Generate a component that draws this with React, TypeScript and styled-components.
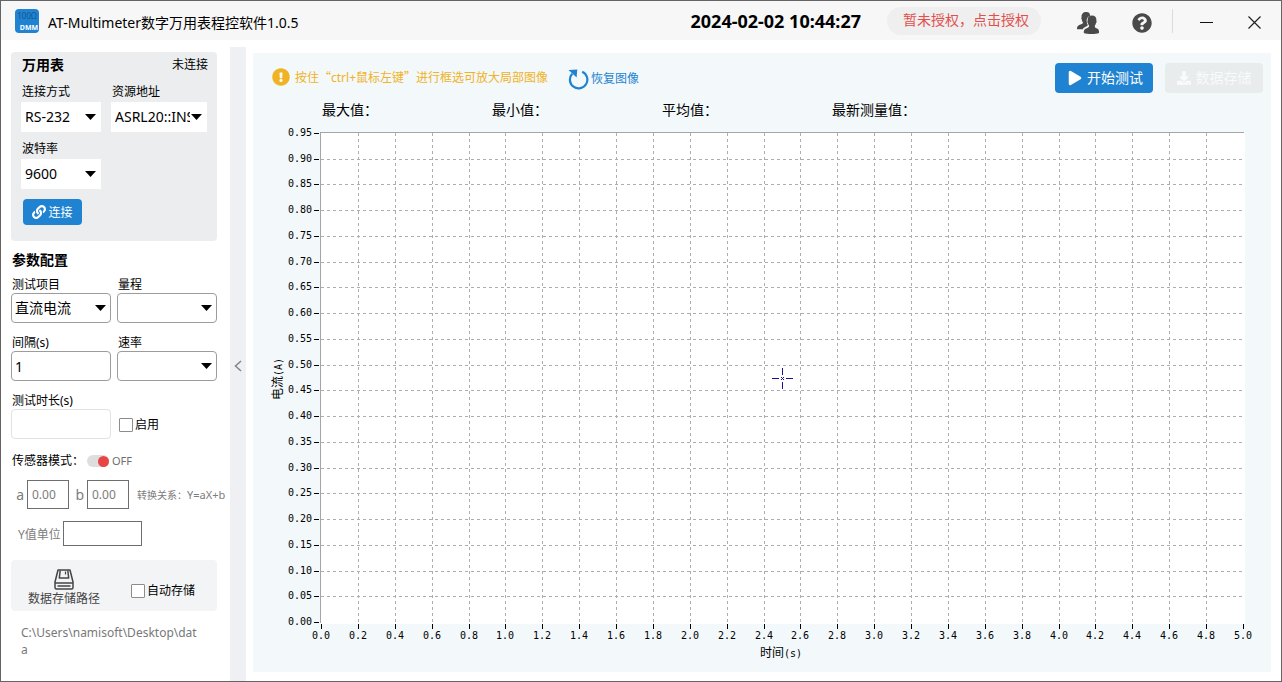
import React, { useId, useLayoutEffect, useRef, useState } from "react";
import styled, { createGlobalStyle } from "styled-components";
import { FaDownload, FaExclamationCircle, FaLink, FaQuestionCircle } from "react-icons/fa";
import { IoPlay } from "react-icons/io5";

const uiFont = `"Noto Sans", "Noto Sans CJK SC", sans-serif`;
const cjkFont = `"Noto Sans CJK SC", sans-serif`;
const axisFont = `"DejaVu Sans Mono", "Noto Sans CJK SC", monospace`;

const GlobalStyle = createGlobalStyle`
  *, *::before, *::after { box-sizing: border-box; }
  body { margin: 0; background: #fff; }
  body, button, input, select { font-family: ${uiFont}; color: #000; }
`;

const Window = styled.div`
  display: flex;
  flex-direction: column;
  height: 100vh;
  min-height: 660px;
  border: 1px solid #646466;
  background: #fff;
  font-size: 12px;
`;

/* ---------- title bar ---------- */

const TitleBar = styled.header`
  display: flex;
  align-items: center;
  flex: none;
  height: 39px;
  padding: 0 3px 0 14px;
  background: #f7f7f7;
`;

const AppTitle = styled.h1`
  margin: 0 auto 0 9px;
  padding-top: 5px;
  font-size: 14px;
  line-height: 20px;
  font-weight: 400;
`;

const Clock = styled.time`
  margin-right: 26px;
  font-size: 18px;
  line-height: 20px;
  font-weight: 700;
`;

const LicenseButton = styled.button`
  height: 28px;
  margin-right: 20px;
  padding: 0 12px 2px 16px;
  border: 0;
  border-radius: 14px;
  background: #efefef;
  color: #e2504e;
  font-size: 14px;
  line-height: 26px;
`;

const BarButton = styled.button<{ $width: number }>`
  display: flex;
  align-items: center;
  justify-content: center;
  width: ${(p) => p.$width}px;
  height: 39px;
  padding: 4px 0 0;
  border: 0;
  background: none;
  color: #4a4a4a;
`;

const BarDivider = styled.span`
  width: 1px;
  height: 24px;
  margin: 0 9px 0 3px;
  background: #dcdcdc;
`;

/* ---------- frame ---------- */

const Body = styled.div`
  display: flex;
  flex: 1;
  min-height: 0;
`;

const Sidebar = styled.aside`
  display: flex;
  flex-direction: column;
  flex: none;
  width: 229px;
  padding: 12px 13px 0 10px;
`;

const CollapseStrip = styled.button`
  flex: none;
  width: 16px;
  margin-top: 7px;
  padding: 6px 0 0;
  border: 0;
  background: #eff0f3;
  color: #80858a;
`;

const Panel = styled.main`
  display: flex;
  flex-direction: column;
  flex: 1;
  min-width: 0;
  margin: 13px 10px 9px 7px;
  background: #f3f8fb;
`;

/* ---------- form parts ---------- */

const SectionTitle = styled.h2`
  margin: 0;
  padding-left: 1px;
  font-size: 14px;
  line-height: 20px;
  font-weight: 700;
`;

const DeviceCard = styled.section`
  display: flex;
  flex-direction: column;
  gap: 5px;
  padding: 3px 9px 16px 10px;
  border-radius: 4px;
  background: #ebedef;
`;

const CardHead = styled.div`
  display: flex;
  justify-content: space-between;
  line-height: 20px;
`;

const ParamSection = styled.section`
  display: flex;
  flex-direction: column;
  gap: 10px;
  margin-top: 9px;

  ${SectionTitle} { margin-bottom: -5px; }
`;

const FieldRow = styled.div<{ $gap: number }>`
  display: flex;
  align-items: flex-end;
  gap: ${(p) => p.$gap}px;
`;

const FieldBox = styled.div<{ $width: number }>`
  display: flex;
  flex-direction: column;
  width: ${(p) => p.$width}px;
`;

const FieldLabel = styled.label<{ $line: number }>`
  padding: 2px 0 0 1px;
  line-height: ${(p) => p.$line}px;
`;

const SelectWrap = styled.div`
  position: relative;
  height: 30px;
`;

const SelectBox = styled.select<{ $outlined?: boolean }>`
  appearance: none;
  width: 100%;
  height: 30px;
  padding: 0 17px 0 ${(p) => (p.$outlined ? 3 : 4)}px;
  border: ${(p) => (p.$outlined ? "1px solid #9c9c9c" : "0")};
  border-radius: ${(p) => (p.$outlined ? 4 : 0)}px;
  background: #fff;
  font-size: 14px;
  line-height: 20px;
`;

const Caret = styled.svg`
  position: absolute;
  top: 12px;
  right: 5px;
  pointer-events: none;
`;

const TextBox = styled.input`
  width: 100%;
  height: 30px;
  padding: 0 3px;
  border: 1px solid #9c9c9c;
  border-radius: 4px;
  background: #fff;
  font-size: 14px;

  &:disabled { border-color: #e2e2e2; }
`;

const CheckLabel = styled.label`
  display: flex;
  align-items: center;
  gap: 2px;
  height: 30px;
  padding-top: 2px;
  line-height: 20px;
`;

const CheckBox = styled.input`
  appearance: none;
  width: 14px;
  height: 14px;
  margin: 0 0 0 2px;
  border: 1px solid #8c8c8c;
  border-radius: 1px;
  background: #fff;
`;

const ConnectButton = styled.button`
  display: flex;
  align-items: center;
  justify-content: center;
  align-self: flex-start;
  gap: 2px;
  width: 59px;
  height: 26px;
  margin: 5px 0 0 2px;
  padding: 0;
  border: 0;
  border-radius: 4px;
  background: #2083d2;
  color: #fff;
  font-size: 12px;
`;

/* ---------- sensor mode ---------- */

const SensorRow = styled.div`
  display: flex;
  align-items: center;
  margin-top: 12px;
  padding-left: 1px;
  line-height: 20px;
`;

const SwitchLabel = styled.label`
  display: flex;
  align-items: center;
  gap: 3px;
  margin-left: 3px;
  color: #6e6e6e;
  font-size: 11px;
`;

const Switch = styled.input`
  appearance: none;
  display: flex;
  justify-content: flex-end;
  align-items: center;
  width: 22px;
  height: 12px;
  margin: 0;
  border-radius: 6px;
  background: #dcdee0;

  &::before {
    content: "";
    width: 11px;
    height: 11px;
    border-radius: 50%;
    background: #ea4545;
  }
`;

const FormulaRow = styled.div<{ $top: number }>`
  display: flex;
  align-items: center;
  margin-top: ${(p) => p.$top}px;
  padding-left: 5px;
  color: #7c7c7c;
  white-space: nowrap;

  > * { flex: none; }
`;

const CoefLabel = styled.label<{ $width: number }>`
  width: ${(p) => p.$width}px;
  padding-right: 3px;
  text-align: right;
  font-size: 14px;
`;

const UnitLabel = styled.label`
  width: 47px;
  padding-left: 2px;
`;

const SquareInput = styled.input<{ $width: number; $height: number }>`
  width: ${(p) => p.$width}px;
  height: ${(p) => p.$height}px;
  padding: 0 4px;
  border: 1px solid #6e6e6e;
  background: #fff;
  color: #7c7c7c;
  font-size: 12px;
`;

const Relation = styled.span`
  margin-left: 8px;
  font-size: 10px;
`;

const Expression = styled.span`
  font-size: 11px;
`;

/* ---------- storage ---------- */

const StoreCard = styled.section`
  display: flex;
  align-items: flex-start;
  justify-content: space-between;
  height: 51px;
  margin-top: 14px;
  padding: 9px 22px 0 17px;
  border-radius: 4px;
  background: #f3f4f6;

  ${CheckLabel} { margin-top: 6px; }
`;

const PathButton = styled.button`
  display: flex;
  flex-direction: column;
  align-items: center;
  padding: 0;
  border: 0;
  background: none;
  color: #444;
  font-size: 12px;
  line-height: 18px;
`;

const PathText = styled.p`
  margin: 13px 0 0;
  padding: 0 14px 0 10px;
  color: #787878;
  font-size: 12px;
  line-height: 17px;
  word-break: break-all;
`;

/* ---------- chart panel ---------- */

const Toolbar = styled.div`
  display: flex;
  align-items: center;
  padding: 10px 8px 0 19px;
`;

const Tip = styled.p`
  display: flex;
  align-items: center;
  gap: 5px;
  margin: 0 20px 2px 0;
  color: #f0b323;
  line-height: 20px;
`;

const Quote = styled.span`
  font-family: ${cjkFont};
`;

const RestoreButton = styled.button`
  display: flex;
  align-items: center;
  gap: 2px;
  margin-right: auto;
  padding: 2px 0 0;
  border: 0;
  background: none;
  color: #2585cf;
  font-size: 12px;
  line-height: 20px;
`;

const ActionButton = styled.button<{ $gap: number }>`
  display: flex;
  align-items: center;
  justify-content: center;
  gap: ${(p) => p.$gap}px;
  width: 98px;
  height: 30px;
  margin-left: 12px;
  padding: 0;
  border: 0;
  border-radius: 4px;
  background: #2083d2;
  color: #fff;
  font-size: 14px;
  line-height: 20px;

  &:disabled {
    background: #e8eced;
    color: #f8fafb;
  }
`;

const Stats = styled.div`
  display: flex;
  flex: none;
  padding-left: 69px;
  font-size: 14px;
  line-height: 34px;
`;

const Stat = styled.span`
  width: 170px;
`;

const ChartBox = styled.div`
  flex: 1;
  min-height: 0;
  overflow: hidden;

  svg { display: block; }
  text { font-family: ${axisFont}; font-size: 10px; fill: #000; }
  .cjk { font-family: ${cjkFont}; font-size: 12px; }
`;

/* ---------- icons ---------- */

const LogoIcon = () => (
  <svg width="24" height="24" viewBox="0 0 24 24" aria-hidden="true">
    <rect width="24" height="24" rx="4" fill="#2083d2" />
    <text x="12" y="10" textAnchor="middle" fontSize="8" fontFamily={uiFont} fill="#15568f">100Ω</text>
    <text x="14" y="21" textAnchor="middle" fontSize="7" fontWeight="700" fontFamily={uiFont} fill="#fff">DMM</text>
  </svg>
);

const UsersIcon = () => (
  <svg width="22" height="22" viewBox="0 0 22 22" fill="currentColor" aria-hidden="true">
    <path d="M9.4 0C12 0 13.2 1.600 13 4C10.400 4.700 9.300 7 9.700 9.600C9.900 11.200 10.300 12.100 10.800 13C10.500 14.200 9 14.400 7.600 15.200C6.600 15.800 6 16.500 5.700 17.300H0V15.800C0.300 13.600 2.200 13.200 4.200 12.300C5.400 11.800 6 11.400 5.900 10.200C5.100 9.400 4.900 8.600 4.800 7.600C4.200 7.200 4.100 5.800 4.600 5.300C4.300 2 6 0 9.400 0Z" />
    <path d="M15 3.400C18.400 3.400 19.700 5.500 19.300 8.700C19.900 9.300 19.600 10.700 19 11.100C18.800 12.200 18.500 12.900 17.800 13.600C17.700 15.200 18.300 15.800 19.500 16.200C21.200 16.800 22 17.700 22 19.600V21C19 22.300 10 22.300 6.800 21V19.600C6.800 17.700 8 16.800 9.800 16.200C11.300 15.700 12.200 15.200 12.100 13.600C11.400 12.900 11.100 12.200 10.900 11.100C10.300 10.700 10.100 9.300 10.700 8.700C10.300 5.500 11.600 3.400 15 3.400Z" />
  </svg>
);

const MinimizeIcon = () => (
  <svg width="13" height="13" viewBox="0 0 13 13" aria-hidden="true">
    <path d="M0 6.500H13" stroke="#111" />
  </svg>
);

const CloseIcon = () => (
  <svg width="13" height="13" viewBox="0 0 13 13" aria-hidden="true">
    <path d="M0.500 0.500L12.500 12.500M12.500 0.500L0.500 12.500" stroke="#222" strokeWidth="1.200" />
  </svg>
);

const ChevronIcon = () => (
  <svg width="8" height="12" viewBox="0 0 8 12" fill="none" aria-hidden="true">
    <path d="M7 1L1.500 6L7 11" stroke="currentColor" strokeWidth="1.500" />
  </svg>
);

const RestoreIcon = () => (
  <svg width="21" height="21" viewBox="0 0 21 21" aria-hidden="true">
    <path d="M14.200 2.700A8.700 8.700 0 1 1 4.200 4.800" fill="none" stroke="#2083d2" strokeWidth="2.200" />
    <path d="M0.500 1L9.300 0.500L8.600 8.600Z" fill="#2083d2" />
  </svg>
);

const DiskIcon = () => (
  <svg width="20" height="21" viewBox="0 0 20 21" fill="none" stroke="#444" strokeWidth="1.500" strokeLinejoin="round" aria-hidden="true">
    <path d="M4 1H16L19 13V18.500Q19 20 17.500 20H2.500Q1 20 1 18.500V13Z" />
    <path d="M1 14H19M3.500 17H16.500M6.200 1.500L5.300 9H14.700L13.800 1.500" />
    <path d="M11.500 2.500V5.500" strokeWidth="1.200" />
  </svg>
);

/* ---------- components ---------- */

type SelectFieldProps = {
  label: string;
  value: string;
  width: number;
  outlined?: boolean;
};

const SelectField = ({ label, value, width, outlined }: SelectFieldProps) => {
  const id = useId();
  return (
    <FieldBox $width={width}>
      <FieldLabel htmlFor={id} $line={outlined ? 16 : 20}>{label}</FieldLabel>
      <SelectWrap>
        <SelectBox id={id} $outlined={outlined}>
          <option>{value}</option>
        </SelectBox>
        <Caret width="11" height="6" viewBox="0 0 11 6" aria-hidden="true">
          <path d="M0 0H11L5.500 6Z" />
        </Caret>
      </SelectWrap>
    </FieldBox>
  );
};

type TextFieldProps = { label: string; value: string; disabled?: boolean };

const TextField = ({ label, value, disabled }: TextFieldProps) => {
  const id = useId();
  return (
    <FieldBox $width={100}>
      <FieldLabel htmlFor={id} $line={16}>{label}</FieldLabel>
      <TextBox id={id} defaultValue={value} disabled={disabled} />
    </FieldBox>
  );
};

const X_STEPS = 25;
const Y_STEPS = 19;

const Chart = () => {
  const box = useRef<HTMLDivElement>(null);
  const [size, setSize] = useState({ w: 1018, h: 545 });

  useLayoutEffect(() => {
    const el = box.current;
    if (!el) return;
    const measure = () => setSize({ w: el.clientWidth, h: el.clientHeight });
    measure();
    const observer = new ResizeObserver(measure);
    observer.observe(el);
    return () => observer.disconnect();
  }, []);

  const left = 67;
  const top = 5;
  const right = size.w - 26;
  const bottom = size.h - 48;
  const xAt = (i: number) => Math.round(left + 1 + ((right - left - 3) * i) / X_STEPS);
  const yAt = (i: number) => Math.round(bottom - 2 - ((bottom - top - 3) * i) / Y_STEPS);
  const xs = Array.from({ length: X_STEPS + 1 }, (_, i) => i);
  const ys = Array.from({ length: Y_STEPS + 1 }, (_, i) => i);
  const cx = Math.floor((left + right - 1) / 2);
  const cy = Math.round((top + bottom) / 2);

  return (
    <ChartBox ref={box}>
      <svg width={size.w} height={size.h} role="img" aria-label="电流随时间变化">
        <rect x={left} y={top} width={right - left} height={bottom - top} fill="#fff" />
        <g stroke="#adadad" strokeDasharray="3 3" shapeRendering="crispEdges">
          {xs.slice(1, -1).map((i) => (
            <line key={i} x1={xAt(i) + 0.5} x2={xAt(i) + 0.5} y1={top + 1} y2={bottom - 1} />
          ))}
          {ys.slice(1, -1).map((i) => (
            <line key={i} x1={left + 1} x2={right - 2} y1={yAt(i) + 0.5} y2={yAt(i) + 0.5} />
          ))}
        </g>
        <g fill="none" shapeRendering="crispEdges">
          <path d={`M${left + 0.5} ${bottom - 1}V${top + 0.5}H${right - 1}`} stroke="#a5a5a5" />
          <path d={xs.map((i) => `M${xAt(i) + 0.5} ${bottom}v5`).join("")} stroke="#000" />
          <path d={ys.map((i) => `M${left - 6} ${yAt(i) + 0.5}h5`).join("")} stroke="#000" />
        </g>
        <g stroke="#12129a" shapeRendering="crispEdges">
          <path d={`M${cx - 10} ${cy + 0.5}h7M${cx + 4} ${cy + 0.5}h7M${cx + 0.5} ${cy - 10}v7M${cx + 0.5} ${cy + 4}v7`} />
          <path d={`M${cx - 1} ${cy - 0.5}h1M${cx + 1} ${cy - 0.5}h1M${cx} ${cy + 0.5}h1M${cx - 1} ${cy + 1.5}h1M${cx + 1} ${cy + 1.5}h1`} />
        </g>
        {xs.map((i) => (
          <text key={i} x={xAt(i)} y={bottom + 15} textAnchor="middle">{(i * 0.2).toFixed(1)}</text>
        ))}
        {ys.map((i) => (
          <text key={i} x={left - 8} y={yAt(i) + 3} textAnchor="end">{(i * 0.05).toFixed(2)}</text>
        ))}
        <text x={cx - 1} y={bottom + 33} textAnchor="middle">
          <tspan className="cjk">时间</tspan>(s)
        </text>
        <text transform={`translate(29 ${cy + 1}) rotate(-90)`} textAnchor="middle">
          <tspan className="cjk">电流</tspan>(A)
        </text>
      </svg>
    </ChartBox>
  );
};

export default function App() {
  return (
    <Window>
      <GlobalStyle />
      <TitleBar>
        <LogoIcon />
        <AppTitle>AT-Multimeter数字万用表程控软件1.0.5</AppTitle>
        <Clock>2024-02-02 10:44:27</Clock>
        <LicenseButton>暂未授权，点击授权</LicenseButton>
        <BarButton $width={54} aria-label="用户"><UsersIcon /></BarButton>
        <BarButton $width={54} aria-label="帮助"><FaQuestionCircle size={20} /></BarButton>
        <BarDivider />
        <BarButton $width={48} aria-label="最小化"><MinimizeIcon /></BarButton>
        <BarButton $width={48} aria-label="关闭"><CloseIcon /></BarButton>
      </TitleBar>

      <Body>
        <Sidebar>
          <DeviceCard>
            <CardHead>
              <SectionTitle>万用表</SectionTitle>
              <span>未连接</span>
            </CardHead>
            <FieldRow $gap={10}>
              <SelectField label="连接方式" value="RS-232" width={80} />
              <SelectField label="资源地址" value="ASRL20::INSTR" width={96} />
            </FieldRow>
            <FieldRow $gap={10}>
              <SelectField label="波特率" value="9600" width={80} />
            </FieldRow>
            <ConnectButton><FaLink size={14} />连接</ConnectButton>
          </DeviceCard>

          <ParamSection>
            <SectionTitle>参数配置</SectionTitle>
            <FieldRow $gap={6}>
              <SelectField label="测试项目" value="直流电流" width={100} outlined />
              <SelectField label="量程" value="" width={100} outlined />
            </FieldRow>
            <FieldRow $gap={6}>
              <TextField label="间隔(s)" value="1" />
              <SelectField label="速率" value="" width={100} outlined />
            </FieldRow>
            <FieldRow $gap={6}>
              <TextField label="测试时长(s)" value="" disabled />
              <CheckLabel><CheckBox type="checkbox" />启用</CheckLabel>
            </FieldRow>
          </ParamSection>

          <SensorRow>
            传感器模式：
            <SwitchLabel>
              <Switch type="checkbox" role="switch" aria-label="传感器模式" />
              OFF
            </SwitchLabel>
          </SensorRow>
          <FormulaRow $top={9}>
            <CoefLabel htmlFor="coef-a" $width={11}>a</CoefLabel>
            <SquareInput id="coef-a" $width={42} $height={29} defaultValue="0.00" />
            <CoefLabel htmlFor="coef-b" $width={18}>b</CoefLabel>
            <SquareInput id="coef-b" $width={42} $height={29} defaultValue="0.00" />
            <Relation>转换关系：<Expression>Y=aX+b</Expression></Relation>
          </FormulaRow>
          <FormulaRow $top={12}>
            <UnitLabel htmlFor="unit-y">Y值单位</UnitLabel>
            <SquareInput id="unit-y" $width={79} $height={25} />
          </FormulaRow>

          <StoreCard>
            <PathButton><DiskIcon />数据存储路径</PathButton>
            <CheckLabel><CheckBox type="checkbox" />自动存储</CheckLabel>
          </StoreCard>
          <PathText>C:\Users\namisoft\Desktop\data</PathText>
        </Sidebar>

        <CollapseStrip aria-label="收起侧栏"><ChevronIcon /></CollapseStrip>

        <Panel>
          <Toolbar>
            <Tip>
              <FaExclamationCircle size={18} />
              <span>按住<Quote>“</Quote>ctrl+鼠标左键<Quote>”</Quote>进行框选可放大局部图像</span>
            </Tip>
            <RestoreButton><RestoreIcon />恢复图像</RestoreButton>
            <ActionButton $gap={2}><IoPlay size={20} />开始测试</ActionButton>
            <ActionButton $gap={5} disabled><FaDownload size={14} />数据存储</ActionButton>
          </Toolbar>
          <Stats>
            <Stat>最大值：</Stat>
            <Stat>最小值：</Stat>
            <Stat>平均值：</Stat>
            <Stat>最新测量值：</Stat>
          </Stats>
          <Chart />
        </Panel>
      </Body>
    </Window>
  );
}
